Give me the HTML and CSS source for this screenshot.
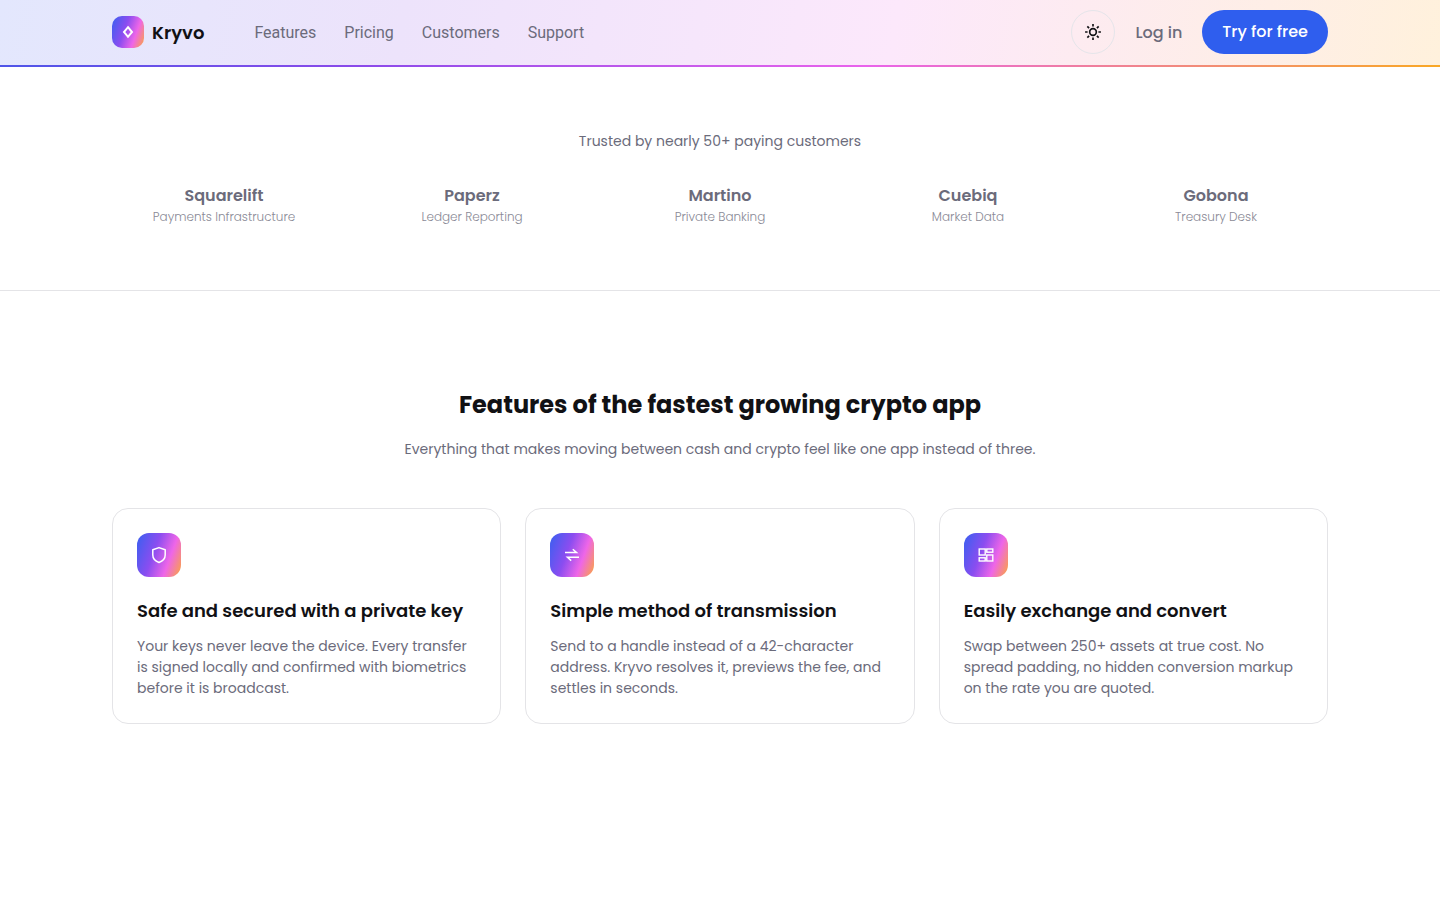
FILE: index.html
```html
<!DOCTYPE html>
<html lang="en">
  <head>
    <meta charset="UTF-8" />
    <meta name="viewport" content="width=device-width, initial-scale=1.0" />
    <title>Kryvo</title>
    <link rel="stylesheet" href="styles.css">
  </head>
  <body>
    <header class="header">
      <div class="container header-inner">
        <a class="brand" href="#">
          <span class="brand-mark">
            <svg width="16" height="16" viewBox="0 0 16 16" fill="none" stroke="currentColor" stroke-width="2">
              <path d="M8 3.2 L12 8 L8 12.8 L4 8 Z" />
            </svg>
          </span>
          Kryvo
        </a>
        <nav class="nav">
          <a href="#features">Features</a>
          <a href="#pricing">Pricing</a>
          <a href="#customers">Customers</a>
          <a href="#support">Support</a>
        </nav>
        <div class="actions">
          <button class="theme-toggle" type="button" aria-label="Toggle theme">
            <svg width="20" height="20" viewBox="0 0 24 24" fill="none" stroke="currentColor" stroke-width="2">
              <circle cx="12" cy="12" r="4" />
              <path d="M12 2.5v3M12 18.5v3M2.5 12h3M18.5 12h3M5.2 5.2l2.1 2.1M16.7 16.7l2.1 2.1M5.2 18.8l2.1-2.1M16.7 7.3l2.1-2.1" />
            </svg>
          </button>
          <a class="login" href="#login">Log in</a>
          <a class="btn" href="#signup">Try for free</a>
        </div>
      </div>
    </header>

    <main>
      <section class="trusted" id="customers">
        <div class="container">
          <p class="trusted-title">Trusted by nearly 50+ paying customers</p>
          <ul class="logos">
            <li><strong>Squarelift</strong><span>Payments Infrastructure</span></li>
            <li><strong>Paperz</strong><span>Ledger Reporting</span></li>
            <li><strong>Martino</strong><span>Private Banking</span></li>
            <li><strong>Cuebiq</strong><span>Market Data</span></li>
            <li><strong>Gobona</strong><span>Treasury Desk</span></li>
          </ul>
        </div>
      </section>

      <section class="features" id="features">
        <div class="container">
          <h2>Features of the fastest growing crypto app</h2>
          <p class="lead">Everything that makes moving between cash and crypto feel like one app instead of three.</p>
          <div class="cards">
            <article class="card">
              <span class="card-icon">
                <svg width="20" height="20" viewBox="0 0 20 20" fill="none" stroke="currentColor" stroke-width="1.5" stroke-linejoin="round">
                  <path d="M10 2.6 L16.2 4.8 V10 C16.2 13.6 13.6 16.2 10 17.5 C6.4 16.2 3.8 13.6 3.8 10 V4.8 Z" />
                </svg>
              </span>
              <h3>Safe and secured with a private key</h3>
              <p>Your keys never leave the device. Every transfer is signed locally and confirmed with biometrics before it is broadcast.</p>
            </article>
            <article class="card">
              <span class="card-icon">
                <svg width="20" height="20" viewBox="0 0 20 20" fill="none" stroke="currentColor" stroke-width="1.5">
                  <path d="M3 7.5 H14.5 L10.8 4.3 M17 12.3 H5.5 L9.2 15.6" />
                </svg>
              </span>
              <h3>Simple method of transmission</h3>
              <p>Send to a handle instead of a 42-character address. Kryvo resolves it, previews the fee, and settles in seconds.</p>
            </article>
            <article class="card">
              <span class="card-icon">
                <svg width="20" height="20" viewBox="0 0 20 20" fill="none" stroke="currentColor" stroke-width="1.4">
                  <rect x="3.2" y="4" width="6" height="6" />
                  <rect x="10.8" y="4" width="6" height="3.2" />
                  <rect x="3.2" y="12.8" width="6" height="3.2" />
                  <rect x="10.8" y="10" width="6" height="6" />
                </svg>
              </span>
              <h3>Easily exchange and convert</h3>
              <p>Swap between 250+ assets at true cost. No spread padding, no hidden conversion markup on the rate you are quoted.</p>
            </article>
          </div>
        </div>
      </section>
    </main>
  </body>
</html>
```
FILE: styles.css
```css
* {
  box-sizing: border-box;
}
body {
  margin: 0;
  font-family: Poppins, Inter, sans-serif;
  font-size: 14px;
  line-height: 21px;
  color: #6b6b7b;
  background: #fff;
}
a {
  color: inherit;
  text-decoration: none;
}
h2,
h3,
p,
ul {
  margin: 0;
  padding: 0;
}
.container {
  max-width: 1280px;
  margin: 0 auto;
  padding: 0 32px;
}
.header {
  background: linear-gradient(100deg, #e3e7fd 0%, #ede3fb 28%, #fce8fb 62%, #fff1dc 100%);
}
.header::after {
  content: "";
  display: block;
  height: 2px;
  background: linear-gradient(90deg, #4f55e8 0%, #8b4aea 25%, #e963ec 60%, #f9a825 100%);
}
.header-inner {
  display: flex;
  align-items: center;
  padding-top: 10px;
  padding-bottom: 11px;
}
.brand {
  display: flex;
  align-items: center;
  gap: 8px;
  font-size: 18px;
  font-weight: 600;
  color: #111114;
}
.brand-mark,
.card-icon {
  display: flex;
  align-items: center;
  justify-content: center;
  color: #fff;
  background: linear-gradient(110deg, #3860f0 0%, #8b4df0 40%, #ee66e8 70%, #fba63a 100%);
}
.brand-mark {
  width: 32px;
  height: 32px;
  border-radius: 10px;
}
.nav {
  display: flex;
  gap: 28px;
  margin-left: 50px;
  font-family: Roboto, sans-serif;
  font-size: 16px;
}
.actions {
  display: flex;
  align-items: center;
  gap: 20px;
  margin-left: auto;
  font-size: 16px;
  font-weight: 500;
}
.theme-toggle {
  display: flex;
  align-items: center;
  justify-content: center;
  width: 44px;
  height: 44px;
  padding: 0;
  border: 1px solid #e5e5ea;
  border-radius: 50%;
  color: #111114;
  background: transparent;
  cursor: pointer;
}
.btn {
  padding: 0 20px;
  line-height: 44px;
  border-radius: 22px;
  color: #fff;
  background: #2f5eee;
}
.trusted {
  padding: 64px 0;
  border-bottom: 1px solid #e4e4e7;
  text-align: center;
}
.logos {
  display: grid;
  grid-template-columns: repeat(5, 1fr);
  gap: 24px;
  margin-top: 32px;
  list-style: none;
}
.logos strong,
.logos span {
  display: block;
}
.logos strong {
  font-size: 16px;
  font-weight: 600;
  line-height: 24px;
}
.logos span {
  font-size: 12px;
  font-weight: 300;
  line-height: 18px;
  color: #8a8a96;
}
.features {
  padding: 96px 0;
}
.features h2 {
  font-size: 24px;
  font-weight: 700;
  line-height: 36px;
  text-align: center;
  color: #111114;
}
.lead {
  margin-top: 16px;
  text-align: center;
}
.cards {
  display: grid;
  grid-template-columns: repeat(3, 1fr);
  gap: 24px;
  margin-top: 48px;
}
.card {
  padding: 24px;
  border: 1px solid #e4e4e7;
  border-radius: 16px;
}
.card-icon {
  width: 44px;
  height: 44px;
  border-radius: 12px;
}
.card h3 {
  margin: 20px 0 12px;
  font-size: 18px;
  font-weight: 600;
  line-height: 27px;
  color: #111114;
}
```
